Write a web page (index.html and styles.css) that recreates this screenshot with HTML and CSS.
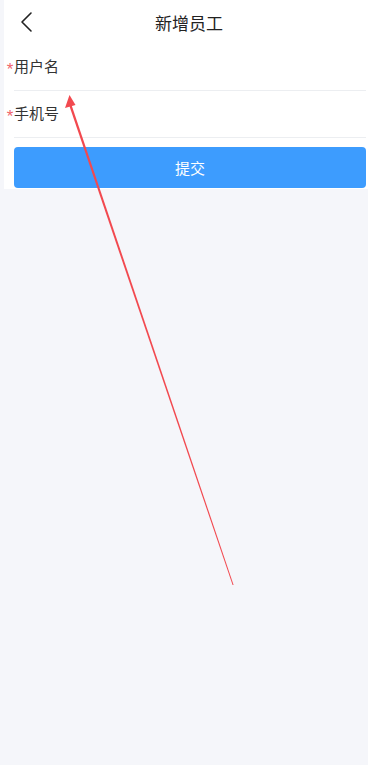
FILE: index.html
```html
<!DOCTYPE html>
<html lang="zh-CN">
<head>
<meta charset="utf-8">
<title>新增员工</title>
<link rel="stylesheet" href="styles.css">
</head>
<body>
<div class="page">
  <div class="panel">
    <header class="navbar">
      <span class="back">
        <svg width="14" height="22" viewBox="0 0 14 22"><path d="M11 2 L2 11 L11 20" fill="none" stroke="#222" stroke-width="1.6" stroke-linecap="round" stroke-linejoin="round"/></svg>
      </span>
      <h1 class="title">新增员工</h1>
    </header>
    <div class="form">
      <div class="row"><span class="req">*</span><span class="label">用户名</span></div>
      <div class="row"><span class="req">*</span><span class="label">手机号</span></div>
      <button class="submit">提交</button>
    </div>
  </div>
</div>
<svg class="annotation" width="368" height="765" viewBox="0 0 368 765">
  <polygon points="233.6,585 232.6,585 68.9,104.6 71.1,103.8" fill="#f2494f"/>
  <polygon points="69.5,95 65,108 75.5,105" fill="#f2494f"/>
</svg>
</body>
</html>
```
FILE: styles.css
```css
html, body {
  margin: 0;
  padding: 0;
}
body {
  background: #f5f6fa;
  font-family: "Noto Sans CJK SC", "Noto Sans", sans-serif;
  color: #333;
  width: 368px;
  height: 765px;
  overflow: hidden;
  position: relative;
}
.page {
  padding-left: 4px;
}
.panel {
  background: #fff;
  padding-bottom: 1px;
}
.navbar {
  height: 44px;
  display: flex;
  align-items: center;
  justify-content: center;
  position: relative;
}
.back {
  position: absolute;
  left: 16px;
  top: 11px;
  display: flex;
}
.title {
  margin: 0;
  font-size: 17px;
  font-weight: 400;
  color: #222;
  padding-left: 6px;
}
.form {
  display: flex;
  flex-direction: column;
}
.row {
  height: 46px;
  box-sizing: content-box;
  margin-left: 10px;
  margin-right: 2px;
  border-bottom: 1px solid #eceef1;
  display: flex;
  align-items: center;
  font-size: 15px;
}
.row > span {
  position: relative;
  top: -2px;
}
.req {
  color: #f0646a;
  width: 8px;
  margin-left: -8px;
  font-family: "Liberation Sans", sans-serif;
  font-size: 17px;
  line-height: 1;
  text-align: center;
}
.row > .req {
  top: 2px;
}
.label {
  color: #333;
}
.submit {
  margin: 9px 2px 0 10px;
  height: 41px;
  border: none;
  border-radius: 4px;
  background: #3d9cfe;
  color: #fff;
  font-family: inherit;
  font-size: 15px;
  padding: 0;
}
.annotation {
  position: absolute;
  left: 0;
  top: 0;
  pointer-events: none;
}
```
